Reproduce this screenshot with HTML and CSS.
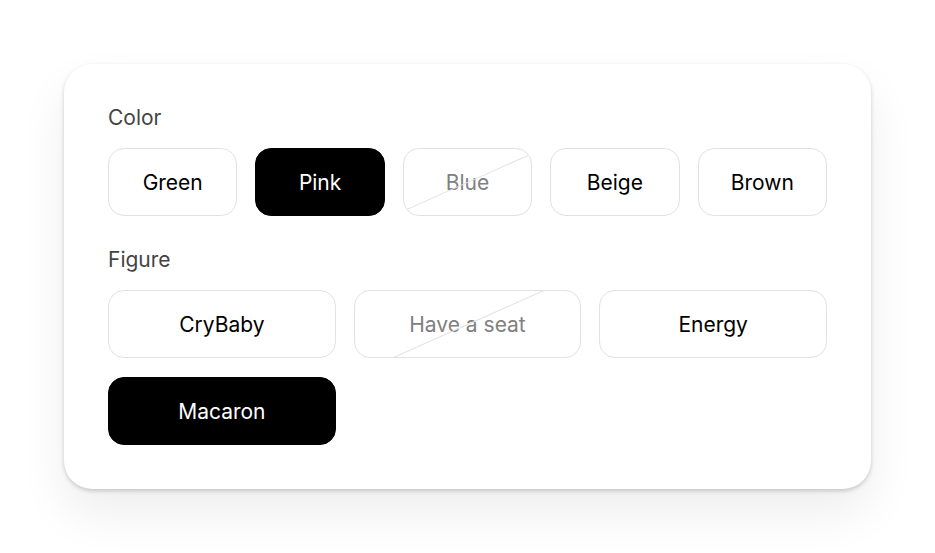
FILE: index.html
```html
<!DOCTYPE html>
<html lang="en">
<head>
    <meta charset="UTF-8">
    <meta name="viewport" content="width=device-width, initial-scale=1.0">
    <title>Variant picker</title>
    <link rel="stylesheet" href="styles.css">
</head>
<body>
    <div class="card">
        <div class="group">
            <div class="group-label">Color</div>
            <div class="options options-5">
                <button class="option">Green</button>
                <button class="option selected">Pink</button>
                <button class="option unavailable" disabled>Blue</button>
                <button class="option">Beige</button>
                <button class="option">Brown</button>
            </div>
        </div>
        <div class="group">
            <div class="group-label">Figure</div>
            <div class="options options-3">
                <button class="option">CryBaby</button>
                <button class="option unavailable" disabled>Have a seat</button>
                <button class="option">Energy</button>
                <button class="option selected">Macaron</button>
            </div>
        </div>
    </div>
</body>
</html>
```

FILE: styles.css
```css
/* Variant picker card */
body {
    font-family: Inter, "Noto Sans", Arial, sans-serif;
    margin: 0;
    padding: 64px;
    min-height: 553px;
    box-sizing: border-box;
    background-color: #fff;
    color: #000;
}
.card {
    width: 807px;
    box-sizing: border-box;
    padding: 42px 44px 44px;
    background-color: #fff;
    border-radius: 28px;
    box-shadow: 0 2px 4px rgba(0, 0, 0, 0.18), 0 24px 48px rgba(0, 0, 0, 0.07);
    display: flex;
    flex-direction: column;
    gap: 32px;
}
.group-label {
    font-size: 21px;
    line-height: 24px;
    color: #444;
    margin-bottom: 18px;
}
.options {
    display: grid;
    column-gap: 18px;
    row-gap: 19px;
}
.options-5 {
    grid-template-columns: repeat(5, 1fr);
}
.options-3 {
    grid-template-columns: repeat(3, 1fr);
}
.option {
    position: relative;
    overflow: hidden;
    height: 68px;
    padding: 0;
    font-family: inherit;
    font-size: 21px;
    color: #000;
    background-color: #fff;
    border: 1px solid #e2e2e2;
    border-radius: 16px;
    cursor: pointer;
}
.option.selected {
    background-color: #000;
    border-color: #000;
    color: #fff;
}
.option.unavailable {
    color: #808080;
    cursor: default;
}
/* diagonal strike for sold-out options */
.option.unavailable::after {
    content: "";
    position: absolute;
    left: -50%;
    top: 50%;
    width: 200%;
    height: 1px;
    background-color: #e2e2e2;
    transform: rotate(-24deg);
}
```
